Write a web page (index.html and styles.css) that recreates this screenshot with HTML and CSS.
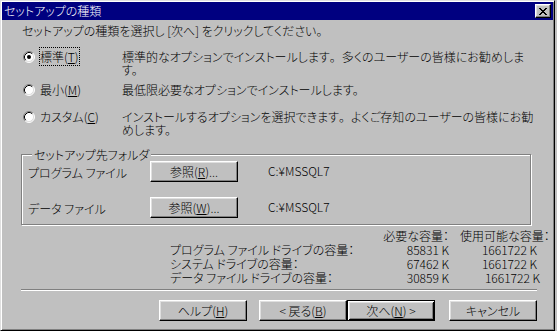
FILE: index.html
```html
<!DOCTYPE html>
<html lang="ja">
<head>
    <meta charset="UTF-8">
    <title>セットアップの種類</title>
    <link rel="stylesheet" href="styles.css">
</head>
<body>
    <div class="window">
        <div class="titlebar">
            <span class="title">セットアップの種類</span>
            <button class="close" type="button" aria-label="閉じる">
                <svg width="8" height="7" viewBox="0 0 8 7" shape-rendering="crispEdges"><path d="M0 0h2v1H0z M6 0h2v1H6z M1 1h2v1H1z M5 1h2v1H5z M2 2h4v1H2z M3 3h2v1H3z M2 4h4v1H2z M1 5h2v1H1z M5 5h2v1H5z M0 6h2v1H0z M6 6h2v1H6z" fill="#000"/></svg>
            </button>
        </div>

        <div class="content">
            <p class="intro">セットアップの種類を選択し [次へ] をクリックしてください。</p>

            <div class="options">
                <div class="choice">
                    <svg class="radio" width="12" height="12" viewBox="0 0 12 12">
                        <circle cx="6" cy="6" r="5" fill="#fff"/>
                        <path d="M2.11 9.89A5.5 5.5 0 0 1 9.89 2.11" fill="none" stroke="#808080"/>
                        <path d="M9.89 2.11A5.5 5.5 0 0 1 2.11 9.89" fill="none" stroke="#fff"/>
                        <path d="M2.82 9.18A4.5 4.5 0 0 1 9.18 2.82" fill="none" stroke="#000"/>
                        <path d="M9.18 2.82A4.5 4.5 0 0 1 2.82 9.18" fill="none" stroke="#dfdfdf"/>
                        <circle cx="6" cy="6" r="2" fill="#000"/>
                    </svg>
                    <span class="choice-label focused">標準(<u>T</u>)</span>
                </div>
                <p class="desc">標準的なオプションでインストールします<span class="stop">。</span>多くのユーザーの皆様にお勧めしま<br>す。</p>

                <div class="choice">
                    <svg class="radio" width="12" height="12" viewBox="0 0 12 12">
                        <circle cx="6" cy="6" r="5" fill="#fff"/>
                        <path d="M2.11 9.89A5.5 5.5 0 0 1 9.89 2.11" fill="none" stroke="#808080"/>
                        <path d="M9.89 2.11A5.5 5.5 0 0 1 2.11 9.89" fill="none" stroke="#fff"/>
                        <path d="M2.82 9.18A4.5 4.5 0 0 1 9.18 2.82" fill="none" stroke="#000"/>
                        <path d="M9.18 2.82A4.5 4.5 0 0 1 2.82 9.18" fill="none" stroke="#dfdfdf"/>
                    </svg>
                    <span class="choice-label">最小(<u>M</u>)</span>
                </div>
                <p class="desc">最低限必要なオプションでインストールします。</p>

                <div class="choice">
                    <svg class="radio" width="12" height="12" viewBox="0 0 12 12">
                        <circle cx="6" cy="6" r="5" fill="#fff"/>
                        <path d="M2.11 9.89A5.5 5.5 0 0 1 9.89 2.11" fill="none" stroke="#808080"/>
                        <path d="M9.89 2.11A5.5 5.5 0 0 1 2.11 9.89" fill="none" stroke="#fff"/>
                        <path d="M2.82 9.18A4.5 4.5 0 0 1 9.18 2.82" fill="none" stroke="#000"/>
                        <path d="M9.18 2.82A4.5 4.5 0 0 1 2.82 9.18" fill="none" stroke="#dfdfdf"/>
                    </svg>
                    <span class="choice-label">カスタム(<u>C</u>)</span>
                </div>
                <p class="desc">インストールするオプションを選択できます<span class="stop">。</span>よくご存知のユーザーの皆様にお勧<br>めします。</p>
            </div>

            <fieldset class="group">
                <legend>セットアップ先フォルダ</legend>
                <div class="folder-row">
                    <span class="folder-label">プログラム ファイル</span>
                    <button class="btn" type="button">参照(<u>R</u>)...</button>
                    <span class="folder-path">C:¥MSSQL7</span>
                </div>
                <div class="folder-row">
                    <span class="folder-label">データ ファイル</span>
                    <button class="btn" type="button">参照(<u>W</u>)...</button>
                    <span class="folder-path">C:¥MSSQL7</span>
                </div>
            </fieldset>

            <div class="space">
                <span></span>
                <span class="space-num">必要な容量：</span>
                <span class="space-head">使用可能な容量：</span>

                <span>プログラム ファイル ドライブの容量：</span>
                <span class="space-num">85831 K</span>
                <span class="space-num">1661722 K</span>

                <span>システム ドライブの容量：</span>
                <span class="space-num">67462 K</span>
                <span class="space-num">1661722 K</span>

                <span>データ ファイル ドライブの容量：</span>
                <span class="space-num">30859 K</span>
                <span class="space-num shifted">1661722 K</span>
            </div>

            <div class="separator"></div>

            <div class="buttons">
                <button class="btn help" type="button">ヘルプ(<u>H</u>)</button>
                <button class="btn" type="button">&lt; 戻る(<u>B</u>)</button>
                <button class="btn btn-default next" type="button">次へ(<u>N</u>) &gt;</button>
                <button class="btn" type="button">キャンセル</button>
            </div>
        </div>
    </div>
</body>
</html>
```

FILE: styles.css
```css
body {
    margin: 0;
    background-color: #c0c0c0;
    font-family: "Noto Sans CJK JP", sans-serif;
    font-size: 12px;
    font-weight: 300;
    line-height: 13px;
    font-feature-settings: "palt";
    color: #000;
}
p {
    margin: 0;
}
u {
    text-underline-offset: 1px;
}
.window {
    width: 555px;
    height: 331px;
    box-sizing: border-box;
    padding: 1px;
    background-color: #c0c0c0;
    border: 1px solid;
    border-color: #dfdfdf #000 #000 #dfdfdf;
    box-shadow: inset 1px 1px #fff, inset -1px -1px #808080;
}
.titlebar {
    display: flex;
    align-items: center;
    justify-content: space-between;
    height: 18px;
    padding: 0 2px 0 2px;
    background-color: #000080;
    color: #fff;
}
.title {
    line-height: 18px;
}
.close {
    display: flex;
    align-items: center;
    justify-content: center;
    width: 16px;
    height: 14px;
    padding: 0;
    background-color: #c0c0c0;
    border: 1px solid;
    border-color: #fff #000 #000 #fff;
    box-shadow: inset -1px -1px #808080, inset 1px 1px #dfdfdf;
}
.content {
    padding: 4px 16px 0 20px;
}
.options {
    display: grid;
    grid-template-columns: 100px 1fr;
    grid-template-rows: 33px 27px auto;
    margin-top: 13px;
}
.choice {
    display: flex;
    align-items: center;
    height: 13px;
    padding-left: 1px;
}
.choice-label {
    margin-left: 4px;
    padding: 2px 0;
    border: 1px dotted transparent;
    white-space: nowrap;
}
.choice-label.focused {
    border-color: #000;
}
.desc {
    white-space: nowrap;
}
.stop {
    font-feature-settings: normal;
}
.group {
    width: 510px;
    box-sizing: border-box;
    margin: 12px 0 0 -1px;
    padding: 0 0 6px 6px;
    border: 1px solid #808080;
    box-shadow: 1px 1px 0 #fff, inset 1px 1px 0 #fff;
}
.group legend {
    margin-left: 4px;
    padding: 0 2px;
    background-color: #c0c0c0;
    line-height: 13px;
}
.folder-row {
    display: flex;
    align-items: center;
    height: 21px;
}
.folder-row + .folder-row {
    margin-top: 15px;
}
.folder-label {
    width: 122px;
    padding-top: 2px;
    white-space: nowrap;
}
.folder-path {
    margin-left: 30px;
    padding-bottom: 3px;
}
.btn {
    width: 88px;
    height: 21px;
    padding: 0;
    background-color: #c0c0c0;
    border: 1px solid;
    border-color: #fff #000 #000 #fff;
    box-shadow: inset -1px -1px #808080, inset 1px 1px #dfdfdf;
    font: inherit;
    color: #000;
    white-space: pre;
}
.btn-default {
    border-color: #000;
    box-shadow: inset 1px 1px #fff, inset -1px -1px #000, inset 2px 2px #dfdfdf, inset -2px -2px #808080;
}
.space {
    display: grid;
    grid-template-columns: 180px 99px 88px;
    row-gap: 1px;
    margin: 4px 0 0 148px;
    white-space: nowrap;
}
.space-num {
    text-align: right;
}
.space-head {
    padding-left: 11px;
}
.space-num.shifted {
    margin-right: -3px;
}
.separator {
    margin: 5px 0 0 -1px;
    border-top: 1px solid #808080;
    border-bottom: 1px solid #fff;
}
.buttons {
    display: flex;
    justify-content: flex-end;
    margin-top: 9px;
}
.help {
    margin-right: 12px;
}
.next {
    margin-right: 14px;
}
```
